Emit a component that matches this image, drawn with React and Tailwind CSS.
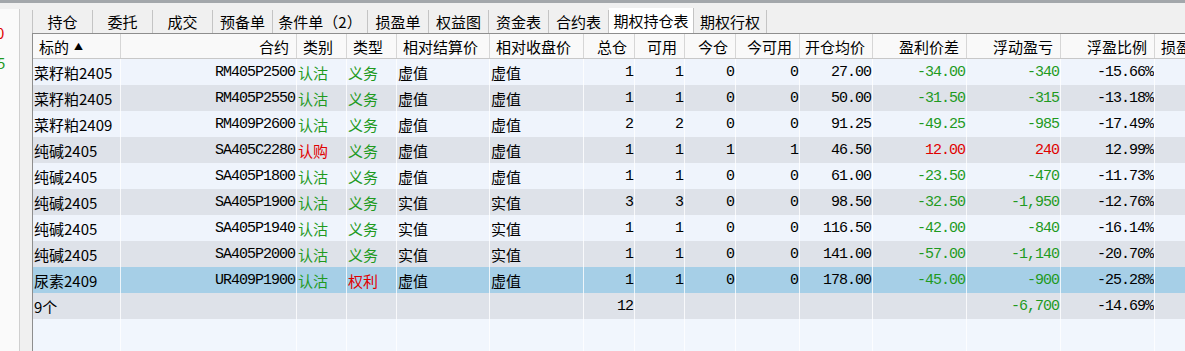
const GREEN = 'text-[#1f9a1f]';
const RED = 'text-[#e00000]';

const tabs = [
  { label: '持仓', w: 'w-[60px]' },
  { label: '委托', w: 'w-[60px]' },
  { label: '成交', w: 'w-[60px]' },
  { label: '预备单', w: 'w-[60px]' },
  { label: '条件单（2）', w: 'w-[95px]' },
  { label: '损盈单', w: 'w-[61px]' },
  { label: '权益图', w: 'w-[60px]' },
  { label: '资金表', w: 'w-[60px]' },
  { label: '合约表', w: 'w-[60px]' },
  { label: '期权持仓表', w: 'w-[85px]', active: true },
  { label: '期权行权', w: 'w-[73px]' },
];

// column widths line up with the header separators
const cols = [
  { key: 'und', title: '标的', w: 'w-[88px]', align: 'left' },
  { key: 'code', title: '合约', w: 'w-[176px]', align: 'right', mono: true },
  { key: 'cp', title: '类别', w: 'w-[50px]', align: 'left' },
  { key: 'side', title: '类型', w: 'w-[50px]', align: 'left' },
  { key: 'rs', title: '相对结算价', w: 'w-[93px]', align: 'left' },
  { key: 'rc', title: '相对收盘价', w: 'w-[94px]', align: 'left' },
  { key: 'tot', title: '总仓', w: 'w-[51px]', align: 'right', mono: true },
  { key: 'avail', title: '可用', w: 'w-[50px]', align: 'right', mono: true },
  { key: 'today', title: '今仓', w: 'w-[51px]', align: 'right', mono: true },
  { key: 'todayAvail', title: '今可用', w: 'w-[64px]', align: 'right', mono: true },
  { key: 'open', title: '开仓均价', w: 'w-[73px]', align: 'right', mono: true },
  { key: 'diff', title: '盈利价差', w: 'w-[94px]', align: 'right', mono: true },
  { key: 'pnl', title: '浮动盈亏', w: 'w-[94px]', align: 'right', mono: true },
  { key: 'pct', title: '浮盈比例', w: 'w-[94px]', align: 'right', mono: true },
  { key: 'sl', title: '损盈比例', w: 'w-[80px]', align: 'left' },
];

const rows = [
  ['菜籽粕2405', 'RM405P2500', '认沽', '义务', '虚值', '虚值', '1', '1', '0', '0', '27.00', '-34.00', '-340', '-15.66%'],
  ['菜籽粕2405', 'RM405P2550', '认沽', '义务', '虚值', '虚值', '1', '1', '0', '0', '50.00', '-31.50', '-315', '-13.18%'],
  ['菜籽粕2409', 'RM409P2600', '认沽', '义务', '虚值', '虚值', '2', '2', '0', '0', '91.25', '-49.25', '-985', '-17.49%'],
  ['纯碱2405', 'SA405C2280', '认购', '义务', '虚值', '虚值', '1', '1', '1', '1', '46.50', '12.00', '240', '12.99%'],
  ['纯碱2405', 'SA405P1800', '认沽', '义务', '虚值', '虚值', '1', '1', '0', '0', '61.00', '-23.50', '-470', '-11.73%'],
  ['纯碱2405', 'SA405P1900', '认沽', '义务', '实值', '实值', '3', '3', '0', '0', '98.50', '-32.50', '-1,950', '-12.76%'],
  ['纯碱2405', 'SA405P1940', '认沽', '义务', '实值', '实值', '1', '1', '0', '0', '116.50', '-42.00', '-840', '-16.14%'],
  ['纯碱2405', 'SA405P2000', '认沽', '义务', '实值', '实值', '1', '1', '0', '0', '141.00', '-57.00', '-1,140', '-20.70%'],
  ['尿素2409', 'UR409P1900', '认沽', '权利', '虚值', '虚值', '1', '1', '0', '0', '178.00', '-45.00', '-900', '-25.28%'],
];

const sumRow = ['9个', '', '', '', '', '', '12', '', '', '', '', '', '-6,700', '-14.69%'];

function colorFor(key, value) {
  if (key === 'cp') return value === '认购' ? RED : GREEN;
  if (key === 'side') return value === '权利' ? RED : GREEN;
  if (key === 'diff' || key === 'pnl') {
    if (!value) return '';
    return value.startsWith('-') ? GREEN : RED;
  }
  return 'text-black';
}

function Row({ values, bg }) {
  return (
    <div className={`flex h-[26px] ${bg}`}>
      {cols.map((c, i) => {
        const v = values[i] || '';
        return (
          <div
            key={c.key}
            className={`${c.w} shrink-0 h-full flex items-center border-r border-white/80 whitespace-nowrap overflow-hidden ${
              c.align === 'right' ? 'justify-end pr-[1px]' : 'justify-start pl-[1px]'
            } ${c.mono ? "font-['Liberation_Mono',monospace] text-[15px] tracking-[-1px]" : 'text-[15px]'} ${colorFor(c.key, v)}`}
          >
            {v}
          </div>
        );
      })}
    </div>
  );
}

export default function App() {
  return (
    <div className="w-[1185px] h-[351px] overflow-hidden bg-[#f0f0f0] font-['Noto_Sans_CJK_SC','Liberation_Sans',sans-serif] text-black leading-none">
      <div className="h-[3px] bg-[#a3a7ab]" />
      <div className="flex h-[348px]">
        {/* left side panel, cut off */}
        <div className="w-[20px] shrink-0 mt-[6px] bg-[#fafafa] border-r border-[#cfcfcf] overflow-hidden flex flex-col">
          <span className={`mt-[16px] -ml-[4px] text-[15px] ${RED}`}>0</span>
          <span className={`mt-[15px] -ml-[3px] text-[15px] ${GREEN}`}>5</span>
        </div>
        <div className="w-[12px] shrink-0" />

        <div className="flex-1 flex flex-col min-w-0">
          {/* tab strip */}
          <div className="h-[30px] flex items-end shrink-0">
            <div className="flex h-[23px] border-l border-[#c4c4c4]">
              {tabs.map((t) => (
                <div
                  key={t.label}
                  className={`${t.w} shrink-0 flex items-center justify-center border-r border-[#c4c4c4] text-[15px] whitespace-nowrap ${
                    t.active ? 'bg-white h-[25px] -mt-[2px]' : 'h-full'
                  }`}
                >
                  {t.label}
                </div>
              ))}
            </div>
          </div>

          {/* grid */}
          <div className="flex-1 border-l border-t border-[#8e8e8e] bg-[#f1f6fd] overflow-hidden">
            <div className="flex h-[25px] bg-[#f9f9f9] border-b border-[#c8c8c8]">
              {cols.map((c) => (
                <div
                  key={c.key}
                  className={`${c.w} shrink-0 h-full flex items-center border-r border-[#d6d6d6] text-[15px] whitespace-nowrap overflow-hidden ${
                    c.align === 'right' ? 'justify-end pr-[7px]' : 'justify-start pl-[6px]'
                  }`}
                >
                  {c.title}
                  {c.key === 'und' && <span className="ml-[5px] text-[9px]">▲</span>}
                </div>
              ))}
            </div>

            {rows.map((r, i) => (
              <Row
                key={i}
                values={r}
                bg={i === 8 ? 'bg-[#a6cfe7]' : i % 2 === 0 ? 'bg-[#eff4fc]' : 'bg-[#dee2e9]'}
              />
            ))}
            <Row values={sumRow} bg="bg-[#dee2e9]" />
            <Row values={[]} bg="bg-[#f1f6fd]" />
            <Row values={[]} bg="bg-[#f1f6fd]" />
          </div>
        </div>
      </div>
    </div>
  );
}
